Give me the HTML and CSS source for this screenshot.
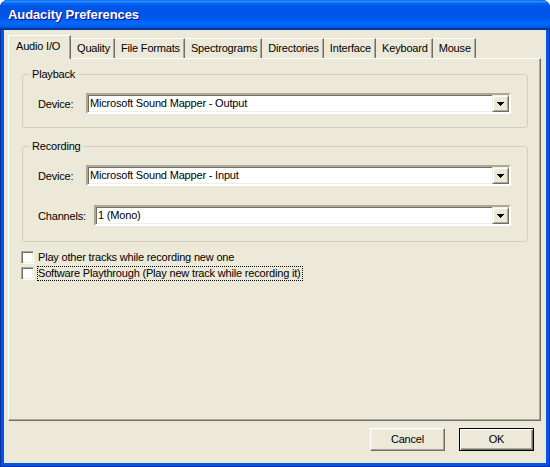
FILE: index.html
```html
<!DOCTYPE html>
<html>
<head>
<meta charset="utf-8">
<title>Audacity Preferences</title>
<link rel="stylesheet" href="styles.css">
</head>
<body>
<div class="window">
  <div class="titlebar"><span class="title">Audacity Preferences</span></div>
  <div class="client">
    <div class="tabs">
      <div class="tab active">Audio I/O</div>
      <div class="tab">Quality</div>
      <div class="tab">File Formats</div>
      <div class="tab">Spectrograms</div>
      <div class="tab">Directories</div>
      <div class="tab">Interface</div>
      <div class="tab">Keyboard</div>
      <div class="tab">Mouse</div>
    </div>
    <div class="panel">
      <fieldset class="group">
        <legend>Playback</legend>
        <div class="row first">
          <span class="lbl">Device:</span>
          <div class="combo"><span class="combo-text">Microsoft Sound Mapper - Output</span><span class="combo-btn"><svg width="7" height="4" viewBox="0 0 7 4" shape-rendering="crispEdges"><rect x="0" y="0" width="7" height="1"/><rect x="1" y="1" width="5" height="1"/><rect x="2" y="2" width="3" height="1"/><rect x="3" y="3" width="1" height="1"/></svg></span></div>
        </div>
      </fieldset>
      <fieldset class="group recording">
        <legend>Recording</legend>
        <div class="row first">
          <span class="lbl">Device:</span>
          <div class="combo"><span class="combo-text">Microsoft Sound Mapper - Input</span><span class="combo-btn"><svg width="7" height="4" viewBox="0 0 7 4" shape-rendering="crispEdges"><rect x="0" y="0" width="7" height="1"/><rect x="1" y="1" width="5" height="1"/><rect x="2" y="2" width="3" height="1"/><rect x="3" y="3" width="1" height="1"/></svg></span></div>
        </div>
        <div class="row second">
          <span class="lbl wide">Channels:</span>
          <div class="combo"><span class="combo-text">1 (Mono)</span><span class="combo-btn"><svg width="7" height="4" viewBox="0 0 7 4" shape-rendering="crispEdges"><rect x="0" y="0" width="7" height="1"/><rect x="1" y="1" width="5" height="1"/><rect x="2" y="2" width="3" height="1"/><rect x="3" y="3" width="1" height="1"/></svg></span></div>
        </div>
      </fieldset>
      <div class="checks">
        <div class="check"><span class="box"></span><span class="check-label">Play other tracks while recording new one</span></div>
        <div class="check"><span class="box"></span><span class="check-label focused">Software Playthrough (Play new track while recording it)</span></div>
      </div>
    </div>
    <div class="buttons">
      <div class="btn">Cancel</div>
      <div class="btn default">OK</div>
    </div>
  </div>
</div>
</body>
</html>
```

FILE: styles.css
```css
* { box-sizing: border-box; }
html, body { margin: 0; padding: 0; background: #ffffff; }
body { font-family: "Liberation Sans", Arial, sans-serif; font-size: 11px; letter-spacing: -0.18px; color: #000; }

.window {
  width: 550px;
  height: 467px;
  display: flex;
  flex-direction: column;
  background: #0055e5;
  border-radius: 8px 8px 0 0;
  overflow: hidden;
  box-shadow: inset 1px 0 #0831a8, inset -1px 0 #0831a8, inset 0 -1px #0831a8;
}

.titlebar {
  height: 30px;
  flex: none;
  display: flex;
  align-items: center;
  padding: 0 0 1px 8px;
  background: linear-gradient(to bottom, #0058ee 0%, #3593ff 4%, #288eff 6%, #127dff 8%, #036ffc 10%, #0262ee 14%, #0057e5 20%, #0054e3 24%, #0055eb 56%, #005bf5 66%, #026afe 76%, #0062ef 86%, #0052d6 92%, #0040ab 94%, #003092 100%);
}
.title {
  color: #fff;
  font-family: "Liberation Sans", Arial, sans-serif;
  font-weight: bold;
  font-size: 13px;
  letter-spacing: -0.1px;
  text-shadow: 1px 1px #0f1089;
}

.client {
  flex: 1;
  margin: 0 4px 4px 4px;
  background: #ece9d8;
  display: flex;
  flex-direction: column;
  padding: 5px 5px 12px 4px;
}

.tabs {
  height: 23px;
  display: flex;
  align-items: flex-end;
  position: relative;
  z-index: 2;
}
.tab {
  height: 20px;
  line-height: 19px;
  padding: 0 4px 0 6px;
  border-top: 1px solid #fff;
  border-right: 1px solid #716f64;
  box-shadow: inset -1px 0 #aca899;
  background: #ece9d8;
  white-space: nowrap;
}
.tab.active {
  height: 24px;
  margin-bottom: -1px;
  line-height: 20px;
  padding: 0 7px 2px 7px;
  border-left: 1px solid #fff;
  width: 63px;
}

.panel {
  flex: 1;
  border: 1px solid;
  border-color: #fff #716f64 #716f64 #fff;
  box-shadow: inset -1px -1px #aca899;
  padding: 9px 12px 0 12px;
  display: flex;
  flex-direction: column;
}

.group {
  margin: 0 0 0 1px;
  padding: 0 7px 13px 7px;
  border: 1px solid #d0d0bf;
  border-radius: 3px;
  min-width: 0;
}
.group legend {
  padding: 0 2px;
  line-height: 13px;
}
.group.recording {
  margin-top: 12px;
  padding-bottom: 15px;
}

.row {
  display: flex;
  align-items: center;
  padding: 0 9px 0 8px;
  height: 21px;
}
.row.first { margin-top: 12px; }
.row.second { margin-top: 19px; }
.lbl { width: 48px; flex: none; }
.lbl.wide { width: 56px; }

.combo {
  flex: 1;
  height: 21px;
  background: #fff;
  border: 2px solid;
  border-color: #aca899 #fff #fff #aca899;
  box-shadow: inset 1px 1px #716f64, inset -1px -1px #f1efe2;
  display: flex;
  align-items: stretch;
}
.combo-text {
  flex: 1;
  padding-left: 2px;
  line-height: 17px;
}
.combo-btn {
  width: 17px;
  flex: none;
  background: #ece9d8;
  border: 1px solid;
  border-color: #f1efe2 #716f64 #716f64 #f1efe2;
  box-shadow: inset 1px 1px #fff, inset -1px -1px #aca899;
  display: flex;
  align-items: center;
  justify-content: center;
}
.combo-btn svg { fill: #000; display: block; }

.checks {
  margin-top: 7px;
  display: flex;
  flex-direction: column;
}
.check {
  height: 16px;
  display: flex;
  align-items: center;
}
.box {
  width: 13px;
  height: 13px;
  flex: none;
  background: #fff;
  border: 1px solid;
  border-color: #aca899 #fff #fff #aca899;
  box-shadow: inset 1px 1px #716f64, inset -1px -1px #f1efe2;
}
.check-label {
  margin-left: 3px;
  border: 1px dotted transparent;
  line-height: 13px;
  padding: 0 1px 0 0;
}
.check-label.focused { border-color: #000; }

.buttons {
  margin-top: 7px;
  display: flex;
  justify-content: flex-end;
  gap: 14px;
  padding-right: 7px;
}
.btn {
  width: 75px;
  height: 23px;
  line-height: 21px;
  text-align: center;
  background: #ece9d8;
  border: 1px solid;
  border-color: #fff #716f64 #716f64 #fff;
  box-shadow: inset -1px -1px #aca899, inset 1px 1px #f1efe2;
}
.btn.default {
  border: 1px solid #000;
  box-shadow: inset 1px 1px #fff, inset -1px -1px #716f64, inset -2px -2px #aca899;
}
```
